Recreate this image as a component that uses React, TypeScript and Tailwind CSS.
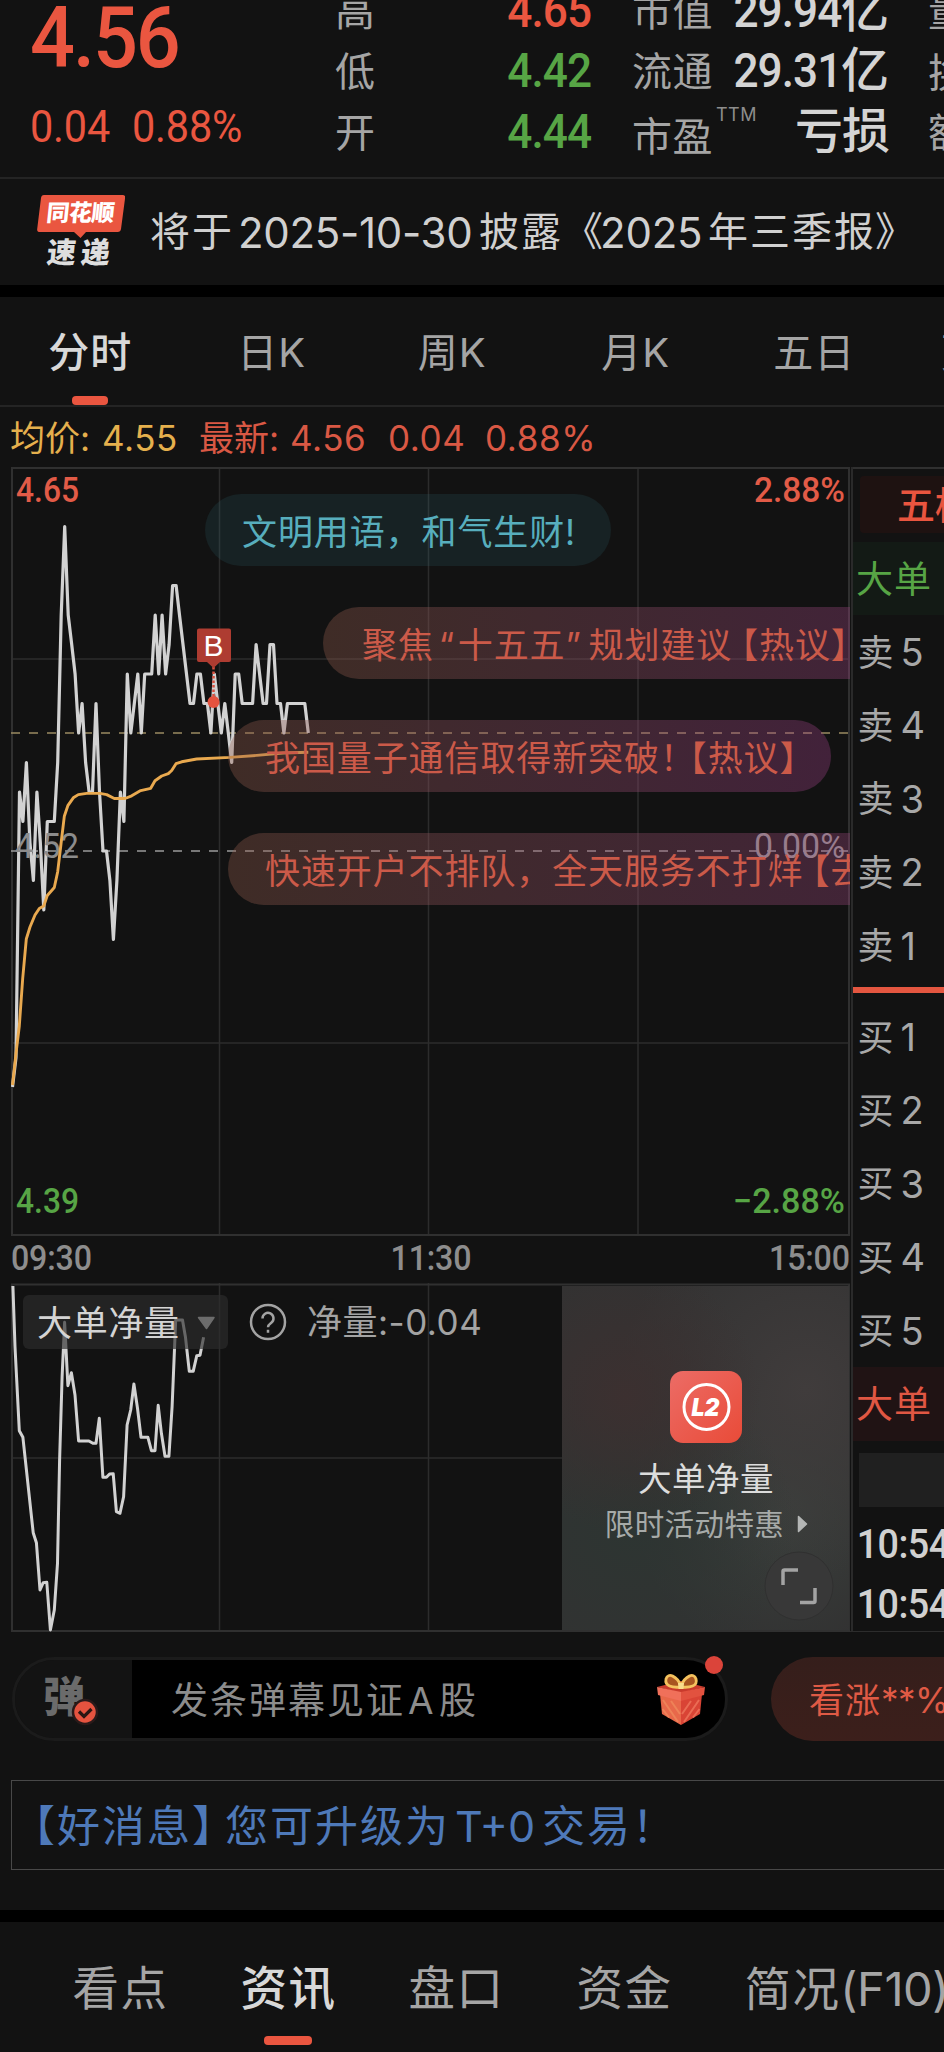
import { clsx } from "clsx";

// Intraday quote page: price header, time-share chart with danmaku, order book, net big-order volume.

const PREV_CLOSE = 4.52;
const CHART_H = 768;
const CENT = 29.5; // px per 0.01
const MINUTE = 3.48;

// one price per minute since 09:30
const PRICES = [
  4.44, 4.45, 4.54, 4.53, 4.55, 4.523, 4.51, 4.54, 4.523, 4.5, 4.53, 4.53, 4.53, 4.55, 4.6, 4.63, 4.6,
  4.59, 4.58, 4.56, 4.57, 4.55, 4.54, 4.54, 4.57, 4.54, 4.52, 4.52, 4.51, 4.49, 4.51, 4.54, 4.53,
  4.58, 4.56, 4.57, 4.58, 4.56, 4.58, 4.58, 4.58, 4.6, 4.58, 4.6, 4.58, 4.59, 4.61, 4.61, 4.6, 4.59,
  4.58, 4.57, 4.57, 4.58, 4.58, 4.57, 4.57, 4.56, 4.58, 4.57, 4.56, 4.57, 4.56, 4.55, 4.58, 4.58,
  4.57, 4.57, 4.57, 4.57, 4.59, 4.58, 4.57, 4.57, 4.59, 4.59, 4.57, 4.57, 4.56, 4.57, 4.57, 4.57,
  4.57, 4.57, 4.57, 4.56,
];

const AVERAGE =
  "1.5,618 5,586.5 8.3,559 11.7,511.5 15.3,472 19,460 24,448 28.3,441.5 32.7,439 36.3,428.5 43.3,420.5 46.7,404.7 50,377 53.3,349.3 57,338.3 62.3,330.8 67.3,327.6 75.7,326.4 89,326.4 95.7,327.6 103.3,331.5 114,331.5 120.7,328.8 129.7,323.6 139.7,321.3 144,313.7 150.7,309 157.3,306.6 160.7,303.5 165,296.7 170.7,294.8 185.7,292 219,290.4 245.7,288.4 272.3,286 297.3,285.3";

const NET_VOLUME =
  "1.9,2 4,62.7 8.3,146.7 11.9,153.3 22.2,248.7 25.4,258.7 29,306 32.2,298.7 35.8,298.3 39.4,346 43.3,326 46.5,279.3 48.6,176 51.1,92.7 53.6,38.3 56.9,101.7 60.4,88.7 64,111 67.6,157 77.9,157 81.9,159.3 85,159.3 88.3,134.3 91.9,193.3 95.4,193.3 98.6,190 102.2,189.7 105.4,227.7 109,229.3 112.6,212.7 116.1,141 119.7,126 122.9,100 126.5,124.3 130,153.3 136.9,153.3 140.4,166.7 144,166.7 147.2,121.3 150.4,149.3 154,172.3 157.9,172.3 161.1,122.7 164.7,36 171.5,36 174.4,52.7 178.3,87.3 182.2,87.3 185.8,71.7 189,71.3 192.6,53.3";

const priceY = (p: number) => CHART_H / 2 - ((p - PREV_CLOSE) / 0.01) * CENT;
const pricePoints = PRICES.map((p, i) => `${(1.5 + i * MINUTE).toFixed(1)},${priceY(p).toFixed(1)}`).join(" ");

const PERIODS = ["分时", "日K", "周K", "月K", "五日", "更多"];
const SELLS = [5, 4, 3, 2, 1];
const BUYS = [1, 2, 3, 4, 5];

function QuoteHeader() {
  const label = "text-[40px] tracking-[0.5px] text-[#a5a5a5]";
  const value = "pt-[3px] font-['Roboto','Noto_Sans_CJK_SC'] text-[48px] font-medium";
  const digits = "inline-block origin-right scale-x-92 tracking-[-1px]";
  return (
    <header className="flex h-[179px] overflow-hidden border-b-2 border-[#242424] whitespace-nowrap">
      <div className="w-[336px] shrink-0 pl-[30px] font-['Roboto'] text-[#ea5640]">
        <div className="-mt-[5px] origin-left scale-x-92 text-[86px] font-medium tracking-[-2.2px]">4.56</div>
        <div className="mt-[23px] flex text-[45px] tracking-[-0.2px]">
          <span className="w-[102px] origin-left scale-x-92">0.04</span>
          <span className="origin-left scale-x-92">0.88%</span>
        </div>
      </div>
      <div className="-mt-[21px] w-[255px] shrink-0">
        {[
          ["高", "4.65", true],
          ["低", "4.42", false],
          ["开", "4.44", false],
        ].map(([k, v, up]) => (
          <div key={String(k)} className="flex h-[60.5px] items-center justify-between">
            <span className={clsx(label, "mt-[5px] -ml-[1px]")}>{k}</span>
            <span className={clsx(value, digits, up ? "text-[#ea5640]" : "text-[#57a545]")}>{v}</span>
          </div>
        ))}
      </div>
      <div className="-mt-[21px] ml-[41px] w-[257px] shrink-0">
        <div className="flex h-[60.5px] items-center justify-between">
          <span className={clsx(label, "mt-[5px]")}>市值</span>
          <span className={clsx(value, "text-[#d4d4d4]")}>
            <span className={digits}>29.94</span>亿
          </span>
        </div>
        <div className="flex h-[60.5px] items-center justify-between">
          <span className={clsx(label, "mt-[5px]")}>流通</span>
          <span className={clsx(value, "text-[#d4d4d4]")}>
            <span className={digits}>29.31</span>亿
          </span>
        </div>
        <div className="flex h-[60.5px] items-center">
          <span className={clsx(label, "mt-[13px]")}>市盈</span>
          <span className="-mt-[31px] ml-[3px] text-[18px] tracking-[0.5px] text-[#8d8d8d]">TTM</span>
          <span className={clsx(value, "ml-auto tracking-[-1px] text-[#d4d4d4]")}>亏损</span>
        </div>
      </div>
      <div className="-mt-[18px] ml-[39px] shrink-0">
        {["量", "换", "额"].map((k) => (
          <div key={k} className={clsx(label, "flex h-[60.5px] items-center")}>
            {k}
          </div>
        ))}
      </div>
    </header>
  );
}

function NewsBar() {
  return (
    <div className="flex h-[106px] items-center whitespace-nowrap">
      <div className="relative ml-[37px] h-[76px] w-[88px] shrink-0">
        <svg className="absolute inset-0" width="88" height="76" viewBox="0 0 88 76">
          <path
            d="M7 1H85.500q3 0 2.600 3L84 35q-.4 3-3.400 3H49L43.500 44 37 38H3Q-.2 38 .2 35L4 4Q4.400 1 7 1Z"
            fill="#ea5640"
          />
        </svg>
        <div className="relative ml-[10px] -skew-x-6 pt-[8px] text-[23px] font-black tracking-[-0.5px] text-white">
          同花顺
        </div>
        <div className="relative ml-[10px] mt-[13px] -skew-x-6 text-[29px] font-black tracking-[5px] text-[#dedede]">
          速递
        </div>
      </div>
      <p className="ml-[25px] flex pt-[1px] text-[40px] tracking-[2px] text-[#d0d0d0]">
        将于
        <span className="ml-[4px] w-[241px] text-[42px] tracking-[-0.3px]">2025-10-30</span>
        披露《
        <span className="-ml-[5px] w-[108px] text-[42px] tracking-[-0.2px]">2025</span>
        年三季报<span className="-ml-[1px]">》</span>
      </p>
    </div>
  );
}

function PeriodTabs() {
  return (
    <nav className="flex h-[110px] overflow-hidden border-b-2 border-[#242424] text-[40px] whitespace-nowrap text-[#a5a5a5]">
      {PERIODS.map((p, i) => (
        <div
          key={p}
          className={clsx(
            "relative flex w-[180.5px] shrink-0 items-center justify-center pt-[3px] tracking-[1px]",
            i === 0 && "text-[41px] font-medium text-[#d8d8d8]",
            (i === 1 || i === 2) && "left-[1px]",
            i === 3 && "left-[4px]",
            i === 4 && "left-[2px]",
            i === 5 && "ml-[-11px]",
          )}
        >
          {p}
          {i === 0 && <span className="absolute bottom-0 left-[72px] h-[9px] w-[36px] rounded-[4px] bg-[#ea5640]" />}
        </div>
      ))}
    </nav>
  );
}

function Danmaku({ className, children }: { className: string; children: React.ReactNode }) {
  return (
    <div
      className={clsx(
        "absolute flex h-[72px] items-center rounded-l-full pt-[4px] pl-[37px] text-[35px] tracking-[0.9px] whitespace-nowrap",
        className,
      )}
    >
      {children}
    </div>
  );
}

function PriceChart() {
  const hot = "bg-linear-to-r from-[#8f5a4a]/36 to-[#973e81]/36 text-[#cb5a49]";
  return (
    <div className="relative h-[769px] w-[839px] overflow-hidden">
      <svg width="839" height="769" viewBox="0 0 839 769" fill="none" className="font-['Roboto'] text-[35px] font-medium">
        <path d="M208.500 0V768M417.500 0V768M627 0V768M0 192H838M0 576H838" stroke="#2c2c2c" strokeWidth="1.500" />
        <path d="M1 768V1H838V768Z" stroke="#303030" strokeWidth="2" />
        <path d="M0 266H838" stroke="#9a8a62" strokeWidth="1.600" strokeDasharray="9 9" />
        <path d="M0 384H838" stroke="#9a9a9a" strokeWidth="1.600" strokeDasharray="9 9" />
        <polyline points={pricePoints} stroke="#d2d2d2" strokeWidth="3.200" strokeLinejoin="round" />
        <g className="font-normal">
          <text x="4" y="390.500" textLength="64" lengthAdjust="spacingAndGlyphs" fill="#8c8c8c">4.52</text>
          <text x="743" y="390.500" textLength="91" lengthAdjust="spacingAndGlyphs" fill="#9a9a9a">0.00%</text>
        </g>
        <polyline points={AVERAGE} stroke="#e9a94f" strokeWidth="2.900" strokeLinejoin="round" />
        <text x="5" y="34.500" textLength="63" lengthAdjust="spacingAndGlyphs" fill="#e25b47">4.65</text>
        <text x="743" y="34.500" textLength="91" lengthAdjust="spacingAndGlyphs" fill="#e25b47">2.88%</text>
        <text x="5" y="746" textLength="63" lengthAdjust="spacingAndGlyphs" fill="#57a545">4.39</text>
        <text x="722" y="746" textLength="112" lengthAdjust="spacingAndGlyphs" fill="#57a545">−2.88%</text>
        {/* buy marker */}
        <path d="M202.500 200V232" stroke="#d8503f" strokeWidth="2.500" strokeDasharray="2.500 2" />
        <path d="M188 161.500H218q2 0 2 2V193q0 2-2 2H209L202.500 201 196 195H188q-2 0-2-2V163.500q0-2 2-2Z" fill="#ae3c31" />
        <circle cx="202.500" cy="235" r="6" fill="#e5533f" />
        <text x="202.500" y="189" textAnchor="middle" fill="#fff" className="font-['Liberation_Sans'] text-[30px] font-normal">B</text>
      </svg>
      <Danmaku className="top-[27px] left-[194px] w-[406px] rounded-r-full bg-[#2b626c]/20 text-[#57aebd]">
        文明用语，和气生财!
      </Danmaku>
      <Danmaku className={clsx("top-[140px] left-[312px] w-[600px]", hot)}>
        <span className="ml-[2px]">聚焦</span>
        <span className="w-[24px] pl-[5px]">“</span>十五五<span className="w-[23px]">”</span>规划建议
        <span className="-ml-[9px]">【热议】</span>
      </Danmaku>
      <Danmaku className={clsx("top-[253px] left-[217px] w-[603px] rounded-r-full", hot)}>
        我国量子通信取得新突破！<span className="-ml-[24px]">【热议】</span>
      </Danmaku>
      <Danmaku className={clsx("top-[366px] left-[217px] w-[760px]", hot)}>
        快速开户不排队，全天服务不打烊<span className="-ml-[9px]">【去开户】</span>
      </Danmaku>
    </div>
  );
}

function Level2Card() {
  return (
    <div className="absolute top-[3px] right-[1px] flex h-[344px] w-[287px] flex-col items-center bg-[#323232] bg-[radial-gradient(circle_at_22%_32%,#3c3030_0%,transparent_42%),radial-gradient(circle_at_25%_70%,#2d3532_0%,transparent_50%),radial-gradient(circle_at_85%_30%,#403c3c_0%,transparent_55%),radial-gradient(circle_at_75%_66%,#3a3f3c_0%,transparent_45%)] pt-[85px] whitespace-nowrap">
      <svg width="72" height="72" viewBox="0 0 72 72">
        <defs>
          <linearGradient id="l2" x1="0" y1="0" x2="1" y2="1">
            <stop offset="0" stopColor="#ec6c66" />
            <stop offset="1" stopColor="#e94b38" />
          </linearGradient>
        </defs>
        <rect width="72" height="72" rx="13" fill="url(#l2)" />
        <circle cx="36.500" cy="36" r="22.500" fill="none" stroke="#fff" strokeWidth="3" />
        <text x="35.500" y="45" textAnchor="middle" fill="#fff" className="font-['Inter'] text-[25px] font-black italic" textLength="28" lengthAdjust="spacingAndGlyphs">L2</text>
      </svg>
      <div className="mt-[20px] ml-[1px] text-[33.500px] tracking-[0.5px] text-[#dcdcdc]">大单净量</div>
      <div className="mt-[13px] ml-[2px] flex items-center text-[29.500px] tracking-[0.4px] text-[#a6aaa8]">
        限时活动特惠
        <svg className="ml-[13px]" width="11" height="18" viewBox="0 0 11 18">
          <path d="M1.500 1.500 9.500 9 1.500 16.500Z" fill="#b4b6b5" stroke="#b4b6b5" strokeWidth="1.500" strokeLinejoin="round" />
        </svg>
      </div>
      <svg className="absolute right-[15px] bottom-[9px]" width="70" height="70" viewBox="0 0 70 70" fill="none">
        <circle cx="35" cy="35" r="34" fill="#383838" stroke="#303030" />
        <path d="M19 34V20.500q0-1.500 1.500-1.500H34M36 51.500H49.500q1.500 0 1.500-1.500V37" stroke="#a3a3a3" strokeWidth="3.500" />
      </svg>
    </div>
  );
}

function VolumePanel() {
  return (
    <div className="relative h-[349px] w-[839px]">
      <svg className="absolute inset-0" width="839" height="349" viewBox="0 0 839 349" fill="none">
        <path d="M208.500 0V348M417.500 0V348M0 175H838" stroke="#2c2c2c" strokeWidth="1.500" />
        <path d="M1 348V1.500H838V348Z" stroke="#303030" strokeWidth="2" />
        <polyline transform="translate(0 1)" points={NET_VOLUME} stroke="#d2d2d2" strokeWidth="3" strokeLinejoin="round" />
      </svg>
      <div className="relative flex items-center pt-[12px] pl-[12px]">
        <div className="flex h-[54px] w-[205px] items-center rounded-[6px] bg-[#2c2c2c]/65 pt-[2px] pl-[14px] text-[35px] tracking-[0.7px] text-[#d4d4d4]">
          大单净量
          <svg className="ml-[17px]" width="19" height="14" viewBox="0 0 19 14">
            <path d="M1.500 1.500H17L9.500 12.500Z" fill="#6c6c6c" stroke="#6c6c6c" strokeWidth="1.500" strokeLinejoin="round" />
          </svg>
        </div>
        <svg className="ml-[21px]" width="38" height="38" viewBox="0 0 38 38" fill="none" stroke="#a3a3a3" strokeWidth="2.500">
          <circle cx="19" cy="19" r="17" />
          <path d="M13.500 15.500a5.500 5.500 0 1 1 8.800 4.300C20 21.500 19 22 19 24.300M19 26.800v3" />
        </svg>
        <span className="ml-[20px] pt-[1px] text-[35px] tracking-[0.5px] text-[#a3a3a3]">净量:-0.04</span>
      </div>
      <Level2Card />
    </div>
  );
}

function BookRow({ side, level }: { side: string; level: number }) {
  return (
    <div className="flex h-[73.4px] items-center pl-[4.500px] text-[36px] text-[#a8a8a8]">
      <span className="pt-[1px]">{side}</span>
      <span className="ml-[7px] text-[38px]">{level}</span>
    </div>
  );
}

function OrderBook() {
  return (
    <aside className="w-[93px] shrink-0 overflow-hidden border-l-2 border-[#2a2a2a] whitespace-nowrap">
      <div className="border-t-2 border-[#303030] pt-[7px] pl-[7px]">
        <div className="flex h-[57px] items-center rounded-l-[4px] bg-[#1e1211] pl-[37px] text-[38px] font-medium text-[#e9553f]">
          五档
        </div>
      </div>
      <div className="mt-[9px] flex h-[73.4px] items-center bg-[#131a15] pt-[1px] pl-[3px] text-[37px] tracking-[1px] text-[#57a545]">
        大单
      </div>
      {SELLS.map((n) => (
        <BookRow key={n} side="卖" level={n} />
      ))}
      <div className="mt-[5px] mb-[7px] h-[6px] bg-[#e45640]" />
      {BUYS.map((n) => (
        <BookRow key={n} side="买" level={n} />
      ))}
      <div className="flex h-[73.4px] items-center bg-[#201314] pt-[1px] pl-[3px] text-[37px] tracking-[1px] text-[#e05743]">
        大单
      </div>
      <div className="mt-[12px] ml-[6px] h-[54px] bg-[#202020]" />
      <div className="mt-[7px] origin-left scale-x-92 pl-[4px] font-['Roboto'] text-[41px] leading-[60px] font-medium tracking-[-0.6px] text-[#d0d0d0]">
        <div>10:54</div>
        <div>10:54</div>
      </div>
    </aside>
  );
}

function Gift() {
  return (
    <svg width="50" height="54" viewBox="0 0 50 54" fill="none">
      <path d="M4 22 25 28V53L6 42Z" fill="#e8684a" />
      <path d="M46 22 25 28V53L44 42Z" fill="#d94435" />
      <path d="M7 28 22 50M15 29 24 42M6.500 37 13 45.500" stroke="#ee8258" strokeWidth="2" />
      <path d="M43 28 28 50M35 29 26 42M43.500 37 37 45.500" stroke="#ea6c54" strokeWidth="2" />
      <path d="M1 15 25 9 49 15 25 21Z" fill="#c93a2c" />
      <path d="M1 15 25 20V29L2 23Z" fill="#f0705a" />
      <path d="M49 15 25 20V29L48 23Z" fill="#e2523f" />
      <path d="M25 14C21 4 12 0 10 7c-1.500 7 6 9 15 8 9 1 17-1 15-8-2-7-11-3-15 7Z" fill="#a85520" stroke="#f4c25e" strokeWidth="2.800" strokeLinejoin="round" />
      <path d="M22 11H28L27.500 17H22.500Z" fill="#f9dc8c" />
    </svg>
  );
}

function CommentBar() {
  return (
    <div className="mt-[25px] flex h-[84px] pl-[12px] whitespace-nowrap">
      <div className="relative flex w-[716px] shrink-0">
        <div className="flex w-full overflow-hidden rounded-full border-[3px] border-[#1b1b1b]">
          <div className="relative w-[117px] shrink-0 bg-[#131313]">
            <span className="absolute top-[16px] left-[28px] text-[42px] font-black text-[#6b6b6b]">弹</span>
            <svg className="absolute top-[38px] left-[55.500px]" width="28" height="28" viewBox="0 0 28 28" fill="none">
              <circle cx="14" cy="14" r="12" fill="#e5533f" stroke="#2a1a1a" strokeWidth="2.500" />
              <path d="M8 13.500 13 18.500 20.500 11" stroke="#2a1513" strokeWidth="3.200" />
            </svg>
          </div>
          <div className="flex flex-1 items-center bg-black pt-[2px] pl-[39px] text-[37px] tracking-[2px] text-[#8c8c8c]">
            发条弹幕见证<span className="ml-[3px] w-[31px]">A</span>股
          </div>
        </div>
        <div className="absolute top-[15px] left-[644px]">
          <Gift />
        </div>
        <span className="absolute top-[-1px] left-[693px] size-[18px] rounded-full bg-[#db443a]" />
      </div>
      <div className="ml-[43px] flex w-[260px] shrink-0 items-center rounded-full bg-linear-to-b from-[#351e1b] to-[#3c1f1b] pt-[2px] pl-[38px] text-[35px] tracking-[1px] text-[#df5a45]">
        看涨<span className="text-[35px] tracking-[-0.5px]">**%</span>
      </div>
    </div>
  );
}

function BottomTabs() {
  const tab = "w-[168px] shrink-0";
  return (
    <nav className="relative flex h-[130px] pt-[43px] pl-[72.500px] text-[46.500px] tracking-[1.4px] whitespace-nowrap text-[#a5a5a5]">
      <span className={tab}>看点</span>
      <span className={clsx(tab, "font-medium text-[#d8d8d8]")}>资讯</span>
      <span className={tab}>盘口</span>
      <span className={tab}>资金</span>
      <span className={tab}>
        简况<span className="text-[47px] tracking-[-0.4px]">(F10)</span>
      </span>
      <span className="absolute top-[114px] left-[264px] h-[9px] w-[48px] rounded-[4px] bg-[#ea5640]" />
    </nav>
  );
}

export default function App() {
  const time = "inline-block scale-x-92";
  return (
    <main className="h-[2052px] w-[944px] overflow-hidden bg-[#121212] font-['Inter','Noto_Sans_CJK_SC',sans-serif] leading-none">
      <QuoteHeader />
      <NewsBar />
      <div className="h-[12px] bg-black" />
      <PeriodTabs />
      <div className="flex h-[60px] items-center pt-[2px] pl-[10px] text-[35px] whitespace-nowrap text-[#d95844]">
        <span className="w-[92px] text-[#e5b04d]">均价:</span>
        <span className="w-[97px] tracking-[0.6px] text-[#e5b04d]">4.55</span>
        <span className="w-[91px]">最新:</span>
        <span className="w-[98px] tracking-[0.6px]">4.56</span>
        <span className="w-[97px] tracking-[0.6px]">0.04</span>
        <span className="tracking-[0.6px]">0.88%</span>
      </div>
      <div className="ml-[11px] flex h-[1165px] border-b border-[#2c2c2c]">
        <section className="w-[840px] shrink-0">
          <PriceChart />
          <div className="flex h-[47px] w-[839px] items-center justify-between pb-[3px] font-['Roboto'] text-[35px] font-medium tracking-[-0.2px] text-[#8d8d8d]">
            <span className={clsx(time, "origin-left")}>09:30</span>
            <span className={time}>11:30</span>
            <span className={clsx(time, "origin-right")}>15:00</span>
          </div>
          <VolumePanel />
        </section>
        <OrderBook />
      </div>
      <CommentBar />
      <div className="mt-[39px] ml-[11px] flex h-[90px] w-[960px] items-center border border-[#484848] pt-[2px] text-[43px] tracking-[2px] whitespace-nowrap text-[#4e79b9]">
        【好消息】<span className="-ml-[12px]">您可升级为</span>
        <span className="ml-[5px] w-[87px] text-[43px] tracking-[0px]">T+0</span>
        交易！
      </div>
      <div className="mt-[40px] h-[12px] bg-black" />
      <BottomTabs />
    </main>
  );
}
